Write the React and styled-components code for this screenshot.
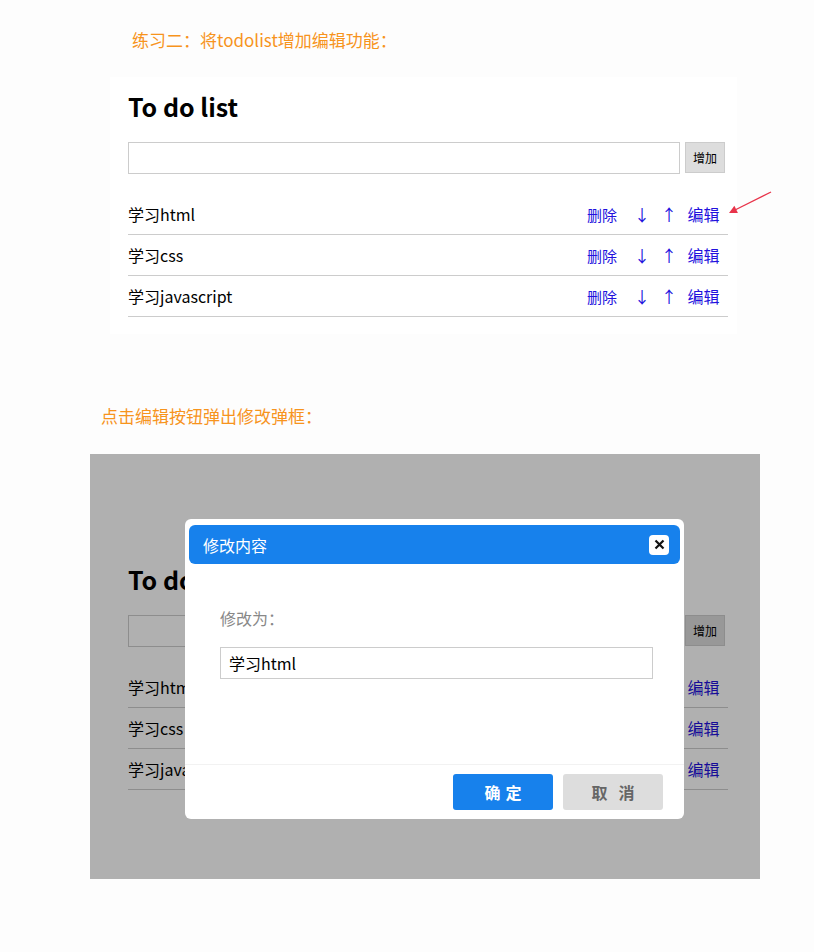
import React from 'react';
import styled, { createGlobalStyle } from 'styled-components';

const GlobalStyle = createGlobalStyle`
  body {
    margin: 0;
    background: #fdfdfd;
    font-family: "Noto Sans CJK SC", "Noto Sans", sans-serif;
  }
`;

const Page = styled.div`
  width: 814px;
  height: 952px;
  padding-top: 28px;
  box-sizing: border-box;
`;

const Note = styled.div`
  margin-left: ${props => props.$indent}px;
  font-size: 17px;
  line-height: 24px;
  color: #f7941d;
`;

const Shot = styled.div`
  position: relative;
  margin: 25px 0 70px 110px;
  width: 627px;
`;

const Card = styled.div`
  width: 627px;
  box-sizing: border-box;
  background: #fff;
  padding: 13px 9px 17px 18px;
`;

const Title = styled.h1`
  margin: 0;
  font-size: 25px;
  line-height: 32px;
  font-weight: 700;
  color: #000;
`;

const InputRow = styled.div`
  display: flex;
  align-items: flex-start;
  margin-top: 20px;
  margin-bottom: 20px;
`;

const TextInput = styled.input`
  width: ${props => props.$width}px;
  height: 32px;
  box-sizing: border-box;
  border: 1px solid #ccc;
  padding: 0 8px;
  font-family: inherit;
  font-size: 16px;
  color: #000;
  background: #fff;
  outline: none;
`;

const AddButton = styled.button`
  margin-left: 5px;
  width: 40px;
  height: 31px;
  padding: 0;
  background: #ddd;
  border: 1px solid #ccc;
  font-family: inherit;
  font-size: 12px;
  color: #000;
`;

const Row = styled.div`
  display: flex;
  align-items: center;
  height: 40px;
  border-bottom: 1px solid #ccc;
  font-size: 16px;
  color: #000;
`;

const ItemText = styled.span`
  flex: 1;
`;

const Action = styled.span`
  color: #2211dd;
  font-size: ${props => (props.$small ? 15 : 16)}px;
  width: ${props => props.$w}px;
  margin-right: ${props => props.$mr || 0}px;
  text-align: center;
`;

const Arrow = styled.svg`
  position: absolute;
  left: 615px;
  top: 110px;
`;

const Stage = styled.div`
  position: relative;
  margin: 26px 0 0 90px;
  width: 670px;
  height: 425px;
  background: #fff;
  padding: 96px 0 0 20px;
  box-sizing: border-box;
  overflow: hidden;
`;

const Mask = styled.div`
  position: absolute;
  inset: 0;
  background: rgba(0, 0, 0, 0.31);
`;

const Modal = styled.div`
  position: absolute;
  left: 95px;
  top: 65px;
  width: 499px;
  height: 300px;
  background: #fff;
  border-radius: 6px;
  padding: 6px 4px 0;
  box-sizing: border-box;
  display: flex;
  flex-direction: column;
`;

const ModalHead = styled.div`
  display: flex;
  align-items: center;
  justify-content: space-between;
  height: 39px;
  background: #1781ec;
  border-radius: 6px;
  padding: 0 11px 0 14px;
  color: #fff;
  font-size: 16px;
`;

const CloseBtn = styled.div`
  width: 20px;
  height: 20px;
  background: #fff;
  border-radius: 4px;
  display: flex;
  align-items: center;
  justify-content: center;
`;

const ModalBody = styled.div`
  flex: 1;
  padding: 43px 0 0 31px;
`;

const Label = styled.div`
  font-size: 16px;
  line-height: 22px;
  color: #888;
  margin-bottom: 18px;
`;

const ModalFoot = styled.div`
  display: flex;
  justify-content: flex-end;
  gap: 10px;
  margin: 0 -4px;
  padding: 9px 21px 9px 0;
  border-top: 1px solid #f2f2f2;
`;

const FootButton = styled.button`
  width: 100px;
  height: 36px;
  border: none;
  border-radius: 3px;
  font-family: inherit;
  font-size: 16px;
  font-weight: 700;
  letter-spacing: ${props => props.$spacing}px;
  text-indent: ${props => props.$spacing}px;
  background: ${props => (props.$primary ? '#1781ec' : '#dddddd')};
  color: ${props => (props.$primary ? '#fff' : '#666')};
`;

const todos = ['学习html', '学习css', '学习javascript'];

function TodoCard() {
  return (
    <Card>
      <Title>To do list</Title>
      <InputRow>
        <TextInput $width={552} readOnly />
        <AddButton>增加</AddButton>
      </InputRow>
      {todos.map(todo => (
        <Row key={todo}>
          <ItemText>{todo}</ItemText>
          <Action $small $w={32} $mr={16}>删除</Action>
          <Action $w={16} $mr={11}>↓</Action>
          <Action $w={16} $mr={10}>↑</Action>
          <Action $w={33} $mr={8}>编辑</Action>
        </Row>
      ))}
    </Card>
  );
}

export default function App() {
  return (
    <Page>
      <GlobalStyle />
      <Note $indent={132}>练习二：将todolist增加编辑功能：</Note>
      <Shot>
        <TodoCard />
        <Arrow width="50" height="30" viewBox="0 0 50 30">
          <line x1="46" y1="5" x2="9" y2="23.5" stroke="#e8334a" strokeWidth="1.3" />
          <polygon points="4,26 12.9,26 9.4,18.8" fill="#e8334a" />
        </Arrow>
      </Shot>
      <Note $indent={101}>点击编辑按钮弹出修改弹框：</Note>
      <Stage>
        <TodoCard />
        <Mask />
        <Modal>
          <ModalHead>
            <span>修改内容</span>
            <CloseBtn>
              <svg width="11" height="11" viewBox="0 0 11 11">
                <path d="M1.5 1.5 L9.5 9.5 M9.5 1.5 L1.5 9.5" stroke="#111" strokeWidth="2.2" />
              </svg>
            </CloseBtn>
          </ModalHead>
          <ModalBody>
            <Label>修改为：</Label>
            <TextInput $width={433} defaultValue="学习html" />
          </ModalBody>
          <ModalFoot>
            <FootButton $primary $spacing={5}>确定</FootButton>
            <FootButton $spacing={11}>取消</FootButton>
          </ModalFoot>
        </Modal>
      </Stage>
    </Page>
  );
}
